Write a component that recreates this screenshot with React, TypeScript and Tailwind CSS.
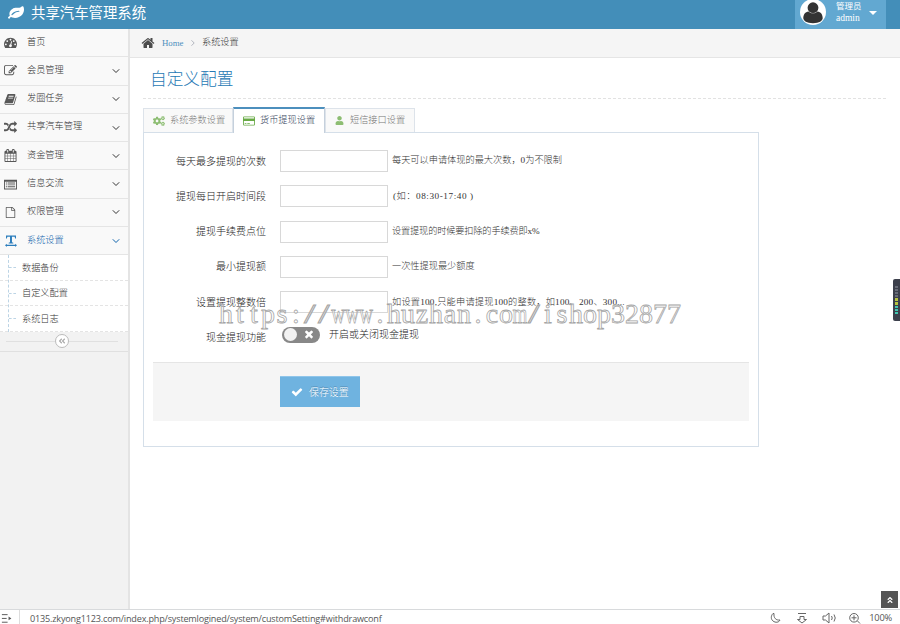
import type { ReactNode } from "react";
import { FaCogs, FaUser, FaAngleDoubleLeft, FaAngleDoubleUp } from "react-icons/fa";

const paths = {
  home: "M1472 992v480q0 26-19 45t-45 19h-384v-384h-256v384h-384q-26 0-45-19t-19-45v-480q0-1 .5-3t.5-3l575-474 575 474q1 2 1 6zm223-69l-62 74q-8 9-21 11h-3q-13 0-21-7l-692-577-692 577q-12 8-24 7-13-2-21-11l-62-74q-8-10-7-23.5t11-21.5l719-599q32-26 76-26t76 26l244 204v-195q0-14 9-23t23-9h192q14 0 23 9t9 23v408l219 182q10 8 11 21.5t-7 23.5z",
  leaf: "M1280 704q0-26-19-45t-45-19q-172 0-318 49.5t-259.5 134-235.5 219.5q-19 21-19 45 0 26 19 45t45 19q24 0 45-19 27-24 74-71t67-66q137-124 268.5-176t313.5-52q26 0 45-19t19-45zm512-198q0 95-20 193-46 224-184.5 383t-357.5 268q-214 108-438 108-148 0-286-47-15-5-88-42t-96-37q-16 0-39.5 32t-45 70-52.5 70-60 32q-43 0-63.5-17.5t-45.5-59.5q-2-4-6-11t-5.5-10-3-9.5-1.5-13.5q0-35 31-73.5t68-65.5 68-56 31-48q0-4-14-38t-16-44q-9-51-9-104 0-115 43.5-220t119-184.5 170.5-139 204-95.5q55-18 145-25.5t179.5-9 178.5-6 163.5-24 113.5-56.5l29.5-29.5 29.5-28 27-20 36.5-16 43.5-4.5q39 0 70.5 46t47.5 112 24 124 8 96z",
  dashboard: "M384 1152q0-53-37.5-90.5t-90.5-37.5-90.5 37.5-37.5 90.5 37.5 90.5 90.5 37.5 90.5-37.5 37.5-90.5zm192-448q0-53-37.5-90.5t-90.5-37.5-90.5 37.5-37.5 90.5 37.5 90.5 90.5 37.5 90.5-37.5 37.5-90.5zm428 481l101-382q6-26-7.5-48.5t-38.5-29.5-48 6.5-30 39.5l-101 382q-60 5-107 43.5t-63 98.5q-20 77 20 146t117 89 146-20 89-117q16-60-6-117t-72-91zm660-33q0-53-37.5-90.5t-90.5-37.5-90.5 37.5-37.5 90.5 37.5 90.5 90.5 37.5 90.5-37.5 37.5-90.5zm-640-640q0-53-37.5-90.5t-90.5-37.5-90.5 37.5-37.5 90.5 37.5 90.5 90.5 37.5 90.5-37.5 37.5-90.5zm448 192q0-53-37.5-90.5t-90.5-37.5-90.5 37.5-37.5 90.5 37.5 90.5 90.5 37.5 90.5-37.5 37.5-90.5zm320 448q0 261-141 483-19 29-54 29h-1402q-35 0-54-29-141-221-141-483 0-182 71-348t191-286 286-191 348-71 348 71 286 191 191 286 71 348z",
  edit: "M888 1184l116-116-152-152-116 116v56h96v96h56zm440-720q-16-16-33 1l-350 350q-17 17-1 33t33-1l350-350q17-17 1-33zm80 594v190q0 119-84.5 203.5t-203.5 84.5h-832q-119 0-203.5-84.5t-84.5-203.5v-832q0-119 84.5-203.5t203.5-84.5h832q63 0 117 25 15 7 18 23 3 17-9 29l-49 49q-14 14-32 8-23-6-45-6h-832q-66 0-113 47t-47 113v832q0 66 47 113t113 47h832q66 0 113-47t47-113v-126q0-13 9-22l64-64q15-15 35-7t20 29zm-96-738l288 288-672 672h-288v-288zm444 132l-92 92-288-288 92-92q28-28 68-28t68 28l152 152q28 28 28 68t-28 68z",
  book: "M1703 478q40 57 18 129l-275 906q-19 64-76.5 107.5t-122.5 43.5h-923q-77 0-148.5-53.5t-99.5-131.5q-24-67-2-127 0-4 3-27t4-37q1-8-3-21.5t-3-19.5q2-11 8-21t16.5-23.5 16.5-23.5q23-38 45-91.5t30-91.5q3-10 .5-30t-.5-28q3-11 17-28t17-23q21-36 42-92t25-90q1-9-2.5-32t.5-28q4-13 22-30.5t22-22.5q19-26 42.5-84.5t27.5-96.5q1-8-3-25.5t-2-26.5q2-8 9-18t18-23 17-21q8-12 16.5-30.5t15-35 16-36 19.5-32 26.5-23.5 36-11.5 47.5 5.5l-1 3q38-9 51-9h761q74 0 114 56t18 130l-274 906q-36 119-71.5 153.5t-128.5 34.5h-869q-27 0-38 15-11 16-1 43 24 70 144 70h923q29 0 56-15.5t35-41.5l300-987q7-22 5-57 38 15 59 43zm-1064 2q-4 13 2 22.5t20 9.5h608q13 0 25.5-9.5t16.5-22.5l21-64q4-13-2-22.5t-20-9.5h-608q-13 0-25.5 9.5t-16.5 22.5zm-83 256q-4 13 2 22.5t20 9.5h608q13 0 25.5-9.5t16.5-22.5l21-64q4-13-2-22.5t-20-9.5h-608q-13 0-25.5 9.5t-16.5 22.5z",
  random: "M666 481q-60 92-137 273-22-45-37-72.5t-40.5-63.5-51-56.5-63-35-81.5-14.5h-224q-14 0-23-9t-9-23v-192q0-14 9-23t23-9h224q250 0 410 225zm1126 799q0 14-9 23l-320 320q-9 9-23 9-13 0-22.5-9.5t-9.5-22.5v-192q-32 0-85 .5t-81 1-73-1-71-5-64-10.5-63-18.5-58-28.5-59-40-55-53.5-56-69.5q59-93 136-273 22 45 37 72.5t40.5 63.5 51 56.5 63 35 81.5 14.5h256v-192q0-14 9-23t23-9q12 0 24 10l319 319q9 9 9 23zm0-896q0 14-9 23l-320 320q-9 9-23 9-13 0-22.5-9.5t-9.5-22.5v-192h-256q-48 0-87 15t-69 45-51 61.5-45 77.5q-32 62-78 171-29 66-49.5 111t-54 105-64 100-74 83-90 68.5-106.5 42-128 16.5h-224q-14 0-23-9t-9-23v-192q0-14 9-23t23-9h224q48 0 87-15t69-45 51-61.5 45-77.5q32-62 78-171 29-66 49.5-111t54-105 64-100 74-83 90-68.5 106.5-42 128-16.5h256v-192q0-14 9-23t23-9q12 0 24 10l319 319q9 9 9 23z",
  calendar: "M192 1664h288v-288h-288v288zm352 0h320v-288h-320v288zm-352-352h288v-320h-288v320zm352 0h320v-320h-320v320zm-352-384h288v-288h-288v288zm736 736h320v-288h-320v288zm-384-736h320v-288h-320v288zm768 736h288v-288h-288v288zm-384-352h320v-320h-320v320zm-352-864v-288q0-13-9.5-22.5t-22.5-9.5h-64q-13 0-22.5 9.5t-9.5 22.5v288q0 13 9.5 22.5t22.5 9.5h64q13 0 22.5-9.5t9.5-22.5zm736 864h288v-320h-288v320zm-384-384h320v-288h-320v288zm384 0h288v-288h-288v288zm32-480v-288q0-13-9.5-22.5t-22.5-9.5h-64q-13 0-22.5 9.5t-9.5 22.5v288q0 13 9.5 22.5t22.5 9.5h64q13 0 22.5-9.5t9.5-22.5zm384-64v1280q0 52-38 90t-90 38h-1408q-52 0-90-38t-38-90v-1280q0-52 38-90t90-38h128v-96q0-66 47-113t113-47h64q66 0 113 47t47 113v96h384v-96q0-66 47-113t113-47h64q66 0 113 47t47 113v96h128q52 0 90 38t38 90z",
  list: "M0 224h1792v1344H0zM128 512v928h1536V512zM256 620h150v130H256zM500 620h1030v130H500zM256 880h150v130H256zM500 880h1030v130H500zM256 1140h150v130H256zM500 1140h1030v130H500z",
  file: "M1596 380q28 28 48 76t20 88v1152q0 40-28 68t-68 28h-1344q-40 0-68-28t-28-68v-1600q0-40 28-68t68-28h896q40 0 88 20t76 48zm-444-244v376h376q-10-29-22-41l-313-313q-12-12-41-22zm384 1528v-1024h-416q-40 0-68-28t-28-68v-416h-768v1536h1280z",
  textWidth: "M150 60h1490v460h-130l-70-250h-400v830l200 50v130H550v-130l200-50V270H350l-70 250H150zM0 1540l270-250v160h1250v-160l270 250-270 250v-160H270v160z",
  card: "M0 384q0-160 160-160h1472q160 0 160 160v1024q0 160-160 160H160Q0 1568 0 1408zM128 384v120h1536V384q0-32-32-32H160q-32 0-32 32zM128 896v512q0 32 32 32h1472q32 0 32-32V896zM256 1190h256v128H256zM640 1190h384v128H640z",
  check: "M1671 566q0 40-28 68l-724 724-136 136q-28 28-68 28t-68-28l-136-136-362-362q-28-28-28-68t28-68l136-136q28-28 68-28t68 28l294 295 656-657q28-28 68-28t68 28l136 136q28 28 28 68z",
  times: "M1490 1322q0 40-28 68l-136 136q-28 28-68 28t-68-28l-294-294-294 294q-28 28-68 28t-68-28l-136-136q-28-28-28-68t28-68l294-294-294-294q-28-28-28-68t28-68l136-136q28-28 68-28t68 28l294 294 294-294q28-28 68-28t68 28l136 136q28 28 28 68t-28 68l-294 294 294 294q28 28 28 68z",
};

type IconName = keyof typeof paths;

function Icon({ name, className = "" }: { name: IconName; className?: string }) {
  return (
    <svg viewBox="0 0 1792 1792" fill="currentColor" fillRule="evenodd" className={`shrink-0 ${className}`}>
      <path d={paths[name]} />
    </svg>
  );
}

const menu: { icon: IconName; label: string; size?: string }[] = [
  { icon: "dashboard", label: "首页" },
  { icon: "edit", label: "会员管理" },
  { icon: "book", label: "发圈任务" },
  { icon: "random", label: "共享汽车管理" },
  { icon: "calendar", label: "资金管理" },
  { icon: "list", label: "信息交流" },
  { icon: "file", label: "权限管理", size: "size-[11px]" },
  { icon: "textWidth", label: "系统设置", size: "size-[12px]" },
];

const subMenu = ["数据备份", "自定义配置", "系统日志"];

const fields = [
  { label: "每天最多提现的次数", hint: "每天可以申请体现的最大次数，0为不限制", tracking: "" },
  { label: "提现每日开启时间段", hint: "(如：08:30-17:40 )", tracking: "tracking-[0.55px] pl-px" },
  { label: "提现手续费点位", hint: "设置提现的时候要扣除的手续费即x%", tracking: "tracking-[-0.15px]" },
  { label: "最小提现额", hint: "一次性提现最少额度", tracking: "" },
  { label: "设置提现整数倍", hint: "如设置100,只能申请提现100的整数，如100、200、300...", tracking: "tracking-[0.22px]" },
];

const siteUrl = "https://www.huzhan.com/ishop32877";

function Header() {
  return (
    <header className="flex h-[29px] shrink-0 bg-[#438eb9] text-white">
      <div className="flex items-center pb-[3px] pl-[8px]">
        <Icon name="leaf" className="size-[16px]" />
        <span className="ml-[7px] text-[14.4px] leading-none font-normal">共享汽车管理系统</span>
      </div>
      <div className="mr-[14px] ml-auto flex w-[91px] bg-[#62a8d1] pl-[5px]">
        <svg viewBox="0 0 26 26" className="-mt-px size-[26px]">
          <circle cx="13" cy="13" r="13" fill="#fff" />
          <circle cx="13" cy="8.7" r="5.4" fill="#333" />
          <path d="M3.3 19.3c0-4 2-6.5 5.2-6.9 2.7 2.5 6.3 2.5 9 0 3.200.400 5.200 2.900 5.200 6.900-.3 2.600-3.300 4.900-9.700 4.900s-9.400-2.300-9.700-4.900z" fill="#333" />
        </svg>
        <div className="ml-[10px] flex w-[26px] flex-col pt-px text-[8.5px] leading-[11px] font-normal whitespace-nowrap">
          <span>管理员</span>
          <span className="pt-px text-[9.5px]">admin</span>
        </div>
        <div className="mt-[11px] ml-[7px] h-0 border-x-4 border-t-4 border-x-transparent border-t-white" />
      </div>
    </header>
  );
}

function Sidebar() {
  return (
    <aside className="flex w-[130px] shrink-0 flex-col border-r-2 border-[#e4e4e4] bg-[#f2f2f2] text-[9.2px] text-[#333]">
      {menu.map((item, i) => (
        <div
          key={item.label}
          className={`flex h-[28.3px] shrink-0 items-center border-b border-[#e5e5e5] bg-[#f9f9f9] pr-[8px] pl-[4px] ${
            i === menu.length - 1 ? "text-[#0d62ab]" : ""
          }`}
        >
          <span className={`flex w-[13px] justify-center ${i === menu.length - 1 ? "text-[#2b7dbc]" : "text-[#585858]"}`}>
            <Icon name={item.icon} className={item.size ?? "size-[13px]"} />
          </span>
          <span className="mb-px ml-[10px] leading-none">{item.label}</span>
          {i > 0 && (
            <svg viewBox="0 0 8 8" className="ml-auto size-[8px]" fill="none" stroke="currentColor">
              <path d="M.8 2.300L4 5.500l3.200-3.200" />
            </svg>
          )}
        </div>
      ))}
      <ul className="relative shrink-0 bg-white">
        <li className="absolute inset-y-0 left-[8px] border-l border-dashed border-[#bcd4e5]" />
        {subMenu.map((s) => (
          <li key={s} className="flex h-[25.5px] items-center border-b border-dashed border-[#e4e4e4] pl-[9px]">
            <span className="w-[7px] border-t border-dashed border-[#bcd4e5]" />
            <span className="mt-px ml-[6px] leading-none">{s}</span>
          </li>
        ))}
      </ul>
      <div className="flex h-[20px] shrink-0 items-center border-b border-[#e0e0e0] pr-[10px] pl-[6px]">
        <span className="h-px flex-1 bg-[#e0e0e0]" />
        <span className="flex size-[14px] items-center justify-center rounded-full border border-[#bbb] bg-white text-[#aaa]">
          <FaAngleDoubleLeft className="size-[8px]" />
        </span>
        <span className="h-px flex-1 bg-[#e0e0e0]" />
      </div>
    </aside>
  );
}

function Tab({ icon, active, children }: { icon: ReactNode; active?: boolean; children: string }) {
  return (
    <div
      className={
        active
          ? "z-10 -mb-px flex h-[26px] w-[92px] items-center border-x border-t-2 border-x-[#c5d0dc] border-t-[#4c8fbd] bg-white pl-[9px] text-[#34435a]"
          : "flex h-[24px] w-[90px] items-center border border-b-0 border-[#dde3ea] bg-[#f9f9f9] pl-[9px] text-[#777]"
      }
    >
      {icon}
      <span className="ml-[5px] text-[9.2px] leading-none whitespace-nowrap">{children}</span>
    </div>
  );
}

function SettingsForm() {
  return (
    <div className="h-[315px] w-[616px] border border-[#d5dfe9] px-[9px] pt-[17px]">
      {fields.map((f) => (
        <div key={f.label} className="mb-[13.3px] flex h-[22px] items-center">
          <label className="mt-px w-[113px] text-right text-[10px] leading-none text-[#1c1c1c]">{f.label}</label>
          <input className="ml-[14px] h-[22px] w-[108px] border border-[#d8d8d8] bg-white" />
          <span className={`ml-[4px] text-[9.2px] leading-none whitespace-pre text-[#333] ${f.tracking}`}>{f.hint}</span>
        </div>
      ))}
      <div className="flex h-[17px] items-center text-[10px] leading-none text-[#1c1c1c]">
        <span className="mt-[6px] w-[113px] text-right">现金提现功能</span>
        <span className="ml-[16px] flex h-[16px] w-[38px] items-center rounded-full bg-[#888] pl-[2px]">
          <span className="size-[13px] rounded-full bg-[#f2f2f2]" />
          <Icon name="times" className="mb-px ml-[6px] size-[12px] text-white" />
        </span>
        <span className="ml-[9px]">开启或关闭现金提现</span>
      </div>
      <div className="mt-[19px] h-[59px] border-t border-[#e5e5e5] bg-[#f5f5f5] pt-[13px] pl-[127px]">
        <button className="flex h-[31px] w-[80px] items-center border-t border-[#8fc5ea] bg-[#6fb3e0] pl-[11px] text-[9.9px] leading-none text-white [text-shadow:0_-1px_0_rgba(0,0,0,0.25)]">
          <Icon name="check" className="size-[12px]" />
          <span className="ml-[6px]">保存设置</span>
        </button>
      </div>
    </div>
  );
}

function StatusBar() {
  return (
    <footer className="flex h-[15px] shrink-0 items-center border-t border-[#d8dadc] bg-white font-normal text-[#555]">
      <svg viewBox="0 0 20 14" className="h-[14px] w-[20px] border-r border-[#ddd]" stroke="#555" fill="none">
        <path d="M2 4.500h6M2 8.500h5M2 12.500h6" />
        <path d="M9 6.500l3 2-3 2z" fill="#555" stroke="none" />
      </svg>
      <span className="ml-[10px] pt-[4px] font-['Open_Sans'] text-[9.1px] leading-none tracking-[-0.185px]">
        0135.zkyong1123.com/index.php/systemlogined/system/customSetting#withdrawconf
      </span>
      <svg viewBox="0 0 96 14" className="mt-[2px] mr-[4px] ml-auto h-[14px] w-[96px]" stroke="#666" fill="none">
        <path d="M4 2.500C2 4.500 1.500 8 4 10s6 1.500 7-1C7 9.500 4.500 7 5 2.500z" />
        <path d="M29 2.500h8M31 5.500h4v3h2.500L33 12l-4.500-3.500H31z" />
        <path d="M54 5h2.500L60 2v10l-3.500-3H54zM62.500 5q1.500 2 0 4M65 3.500q2.500 3.500 0 7" />
        <path d="M85 2.500a4.300 4.300 0 1 1 0 8.600 4.300 4.300 0 0 1 0-8.600zM88.500 10l2.500 2.500M82.500 6.800h5M85 4.300v5" />
      </svg>
      <span className="mr-[8px] pt-[2px] font-['Open_Sans'] text-[9.3px] leading-none tracking-[-0.2px]">100%</span>
    </footer>
  );
}

export default function App() {
  return (
    <div className="relative flex h-[624px] w-[900px] flex-col overflow-hidden bg-white font-['Liberation_Serif','Noto_Sans_CJK_SC',serif] font-light">
      <Header />
      <div className="flex min-h-0 flex-1">
        <Sidebar />
        <main className="min-w-0 flex-1">
          <div className="flex h-[29px] items-center border-b border-[#e5e5e5] bg-[#f5f5f5] pl-[11px] text-[9.2px] leading-none">
            <Icon name="home" className="size-[14px] text-[#4c4c4c]" />
            <span className="ml-[7px] w-[20px] text-[8.8px] text-[#4c8fbd]">Home</span>
            <svg viewBox="0 0 8 8" className="ml-[7px] size-[8px]" fill="none" stroke="#b2b6bf">
              <path d="M2.500 1.300L5.200 4 2.500 6.700" />
            </svg>
            <span className="ml-[5px] text-[#333]">系统设置</span>
          </div>
          <div className="pr-[14px] pl-[13px]">
            <h1 className="h-[41px] border-b border-dashed border-[#e2e2e2] pt-[13px] pl-[7px] text-[16.7px] leading-[18px] text-[#2679b5]">
              自定义配置
            </h1>
            <div className="mt-[8px] flex items-end">
              <Tab icon={<FaCogs className="size-[12px] text-[#69aa46] opacity-75" />}>系统参数设置</Tab>
              <Tab active icon={<Icon name="card" className="size-[12px] text-[#69aa46]" />}>货币提现设置</Tab>
              <Tab icon={<FaUser className="mr-px size-[9px] text-[#69aa46] opacity-75" />}>短信接口设置</Tab>
            </div>
            <SettingsForm />
          </div>
        </main>
      </div>
      <StatusBar />
      <div className="absolute top-[591px] right-[2px] flex h-[17px] w-[17px] items-center justify-center bg-[#555] text-white">
        <FaAngleDoubleUp className="size-[8px]" />
      </div>
      <div className="absolute top-[279px] right-0 flex h-[42px] w-[7px] flex-col items-center gap-px rounded-l-[2px] bg-[#3c404c] pt-[7px]">
        {[0, 1, 2, 3].map((n) => (
          <span key={n} className="h-[2px] w-[3px] bg-[#686c78]" />
        ))}
        {[0, 1].map((n) => (
          <span key={n} className="h-[3px] w-[3px] bg-[#b6c440]" />
        ))}
        {[0, 1, 2].map((n) => (
          <span key={n} className="h-[2px] w-[3px] bg-[#42c6b0]" />
        ))}
      </div>
      {/* every glyph sits in a 14px cell, wide letters are squeezed to fit */}
      <div className="pointer-events-none absolute top-[300px] left-[219px] flex text-[28px] leading-[28px] font-normal text-white/50 [-webkit-text-stroke:0.8px_#a5a5a5]">
        {siteUrl.split("").map((c, i) => (
          <span key={i} className="flex w-[14px] justify-center">
            <span className={c === "w" || c === "m" ? "scale-x-[0.68]" : c === "/" ? "scale-x-150" : ""}>{c}</span>
          </span>
        ))}
      </div>
    </div>
  );
}
